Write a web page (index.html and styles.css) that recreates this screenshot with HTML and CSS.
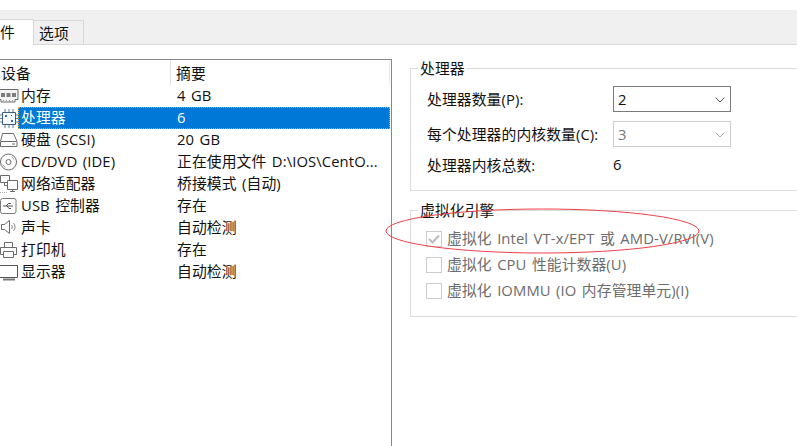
FILE: index.html
```html
<!DOCTYPE html>
<html lang="zh-CN">
<head>
  <meta charset="UTF-8">
  <title>虚拟机设置</title>
  <link rel="stylesheet" href="styles.css">
</head>
<body>
  <!-- Tabs -->
  <div class="tab-strip">
    <div class="tab tab-active">件</div>
    <div class="tab">选项</div>
  </div>

  <div class="content">
    <!-- Device list -->
    <div class="device-panel">
      <div class="device-head">
        <div class="col-name">设备</div>
        <div class="col-summary">摘要</div>
      </div>
      <div class="device-row">
        <svg class="device-icon" viewBox="0 0 18 20"><path d="M-1 3.500h19v10h-3v2.500H1v-2.500h-2z" fill="#f4f4f4" stroke="#6b6b6b"/><path d="M1 7h4v4H1zM6.500 7h4v4h-4zM12 7h4v4h-4z" fill="#7d7d7d"/><path d="M3 14.500h1M6 14.500h1M9 14.500h1M12 14.500h1" stroke="#999"/></svg>
        <div class="col-name">内存</div>
        <div class="col-summary">4 GB</div>
      </div>
      <div class="device-row selected">
        <svg class="device-icon" viewBox="0 0 18 20"><path d="M2.500 4.500h13v12h-13z" fill="#f6fbff" stroke="#3f5f80"/><path d="M0 7h2M0 10.500h2M0 14h2M16 7h2M16 10.500h2M16 14h2M5 1v3M9 1v3M13 1v3M5 17v3M9 17v3M13 17v3" stroke="#5a7ea6"/><path d="M5 7h2v2H5zM11 12h2v2h-2zM11 7h1v1h-1z" fill="#2c6cb0"/></svg>
        <div class="row-fill">
          <div class="col-name">处理器</div>
          <div class="col-summary">6</div>
        </div>
      </div>
      <div class="device-row">
        <svg class="device-icon" viewBox="0 0 18 20"><path d="M2.500 3.500h11l3.500 8v5H.5v-5z" fill="#fff" stroke="#6b6b6b"/><path d="M1 11.500h15.500M12 14h3" stroke="#6b6b6b"/></svg>
        <div class="col-name">硬盘 (SCSI)</div>
        <div class="col-summary">20 GB</div>
      </div>
      <div class="device-row">
        <svg class="device-icon" viewBox="0 0 18 20"><circle cx="8.500" cy="10" r="8" fill="#fff" stroke="#6b6b6b"/><circle cx="8.500" cy="10" r="2.500" fill="#fff" stroke="#6b6b6b"/><path d="M11.500 4.500a6 6 0 0 1 2.500 3M5.500 15.500a6 6 0 0 1-2.500-3" fill="none" stroke="#999"/></svg>
        <div class="col-name">CD/DVD (IDE)</div>
        <div class="col-summary">正在使用文件 D:\IOS\CentO...</div>
      </div>
      <div class="device-row">
        <svg class="device-icon" viewBox="0 0 18 20"><path d="M.5 1.500h9v7h-9z" fill="#fff" stroke="#6b6b6b"/><path d="M7.500 6.500h10v9h-10z" fill="#fff" stroke="#6b6b6b"/><path d="M4.500 8.500v3h3M12.500 15.500v2M10 17.500h5" fill="none" stroke="#6b6b6b"/><path d="M0 18.500h8" stroke="#aaa" stroke-dasharray="1 1"/></svg>
        <div class="col-name">网络适配器</div>
        <div class="col-summary">桥接模式 (自动)</div>
      </div>
      <div class="device-row">
        <svg class="device-icon" viewBox="0 0 18 20"><rect x=".5" y="2.500" width="15.500" height="15" rx="2" fill="#fff" stroke="#7a7a7a"/><path d="M3 10h10M6 10l2.500-2.500H11M7 10l2 2.500h2" fill="none" stroke="#555"/></svg>
        <div class="col-name">USB 控制器</div>
        <div class="col-summary">存在</div>
      </div>
      <div class="device-row">
        <svg class="device-icon" viewBox="0 0 18 20"><path d="M1.500 6.500h3l5-4v13l-5-4h-3z" fill="#fff" stroke="#6b6b6b"/><path d="M11.500 7a3 3 0 0 1 0 4M13.500 5a6 6 0 0 1 0 8" fill="none" stroke="#8a8a8a"/></svg>
        <div class="col-name">声卡</div>
        <div class="col-summary">自动检测</div>
      </div>
      <div class="device-row">
        <svg class="device-icon" viewBox="0 0 18 20"><path d="M4.500 7.500v-5h8v5" fill="#fff" stroke="#6b6b6b"/><path d="M3.500 14.500h-3v-7h16v7h-3" fill="#fff" stroke="#6b6b6b"/><path d="M3.500 11.500h10v6h-10z" fill="#fff" stroke="#6b6b6b"/></svg>
        <div class="col-name">打印机</div>
        <div class="col-summary">存在</div>
      </div>
      <div class="device-row">
        <svg class="device-icon" viewBox="0 0 18 20"><path d="M-1.500 3.500h19v12h-19z" fill="#fff" stroke="#555"/><path d="M3 17.500h12" stroke="#777" stroke-width="2"/></svg>
        <div class="col-name">显示器</div>
        <div class="col-summary">自动检测</div>
      </div>
    </div>

    <!-- Settings -->
    <div class="settings">
      <div class="group group-cpu">
        <div class="legend">处理器</div>
        <div class="field">
          <div class="field-label">处理器数量(P):</div>
          <div class="combo">2<svg class="combo-arrow" viewBox="0 0 10 6"><path d="M.5 .5l4.500 4.500 4.500-4.500" fill="none" stroke="#555"/></svg></div>
        </div>
        <div class="field">
          <div class="field-label">每个处理器的内核数量(C):</div>
          <div class="combo combo-disabled">3<svg class="combo-arrow" viewBox="0 0 10 6"><path d="M.5 .5l4.500 4.500 4.500-4.500" fill="none" stroke="#aaa"/></svg></div>
        </div>
        <div class="field field-total">
          <div class="field-label">处理器内核总数:</div>
          <div class="field-value">6</div>
        </div>
      </div>

      <div class="group group-virt">
        <div class="legend">虚拟化引擎</div>
        <div class="check">
          <div class="check-box"><svg viewBox="0 0 14 14"><path d="M2 7l3.500 3.500L12 3.500" fill="none" stroke="#bbb" stroke-width="2"/></svg></div>
          <div class="check-text">虚拟化 Intel VT-x/EPT 或 AMD-V/RVI(V)</div>
        </div>
        <div class="check">
          <div class="check-box"></div>
          <div class="check-text">虚拟化 CPU 性能计数器(U)</div>
        </div>
        <div class="check">
          <div class="check-box"></div>
          <div class="check-text">虚拟化 IOMMU (IO 内存管理单元)(I)</div>
        </div>
      </div>
    </div>
  </div>

  <!-- Hand drawn annotation -->
  <svg class="annotation" viewBox="0 0 797 446"><ellipse cx="542.500" cy="231" rx="156.500" ry="22" fill="none" stroke="#f0404a"/></svg>
</body>
</html>
```

FILE: styles.css
```css
html, body {
  margin: 0;
  height: 446px;
  overflow: hidden;
}

body {
  position: relative;
  width: 797px;
  background-color: #fff;
  color: #111;
  font-family: "Open Sans", "Noto Sans CJK SC", sans-serif;
  font-size: 14.8px;
  letter-spacing: 0.1px;
  word-spacing: 1.5px;
}

.tab-strip {
  display: flex;
  align-items: flex-end;
  height: 33px;
  margin-top: 10px;
  padding-top: 1px;
  background-color: #f0f0f0;
  border-bottom: 1px solid #d9d9d9;
}

.tab {
  width: 44px;
  height: 23px;
  padding-left: 5px;
  line-height: 25px;
  background-color: #f0f0f0;
  border: 1px solid #d9d9d9;
  border-bottom: none;
  border-left: none;
}

.tab-active {
  width: 33px;
  height: 25px;
  margin-bottom: -1px;
  padding-left: 0;
  line-height: 25px;
  background-color: #fff;
}

.content {
  display: flex;
  height: 401px;
}

.device-panel {
  flex: none;
  width: 391px;
  margin-top: 14px;
  border-top: 1px solid #828790;
  border-right: 1px solid #828790;
}

.device-head {
  display: flex;
  height: 25px;
  line-height: 27px;
  margin-right: 1px;
  border-right: 1px solid #ececec;
}

.device-head .col-name {
  width: 171px;
  padding-left: 1px;
  box-sizing: border-box;
  border-right: 1px solid #e2e2e2;
}

.device-head .col-summary {
  padding-left: 5px;
}

.device-row {
  display: flex;
  align-items: center;
  height: 22px;
}

.device-icon {
  flex: none;
  width: 18px;
  height: 20px;
  overflow: visible;
}

.device-row .col-name {
  flex: none;
  width: 150px;
  margin-left: 3px;
  padding-bottom: 2px;
  line-height: 20px;
}

.device-row .col-summary {
  margin-left: 6px;
  padding-bottom: 2px;
  line-height: 20px;
  white-space: nowrap;
}

.row-fill {
  display: flex;
  flex: 1;
  height: 22px;
  margin-right: 1px;
  background-color: #0078d7;
  color: #fff;
  outline: 1px dotted #f0a030;
  outline-offset: -1px;
}

.settings {
  flex: 1;
  padding: 23px 0 0 18px;
}

.group {
  position: relative;
  margin-right: -10px;
  border: 1px solid #dcdcdc;
  box-sizing: border-box;
  padding-left: 16px;
}

.group-cpu {
  height: 123px;
  padding-top: 17px;
}

.group-virt {
  height: 107px;
  margin-top: 19px;
  padding-top: 15px;
  padding-left: 15px;
  color: #6d6d6d;
}

.legend {
  position: absolute;
  top: -11px;
  left: 7px;
  padding: 0 2px;
  line-height: 20px;
  background-color: #fff;
  color: #111;
}

.field {
  display: flex;
  align-items: center;
  height: 26px;
  margin-bottom: 9px;
}

.field-label {
  flex: none;
  width: 186px;
  padding-bottom: 1px;
  white-space: nowrap;
}

.combo {
  position: relative;
  width: 118px;
  height: 26px;
  line-height: 24px;
  padding-left: 4px;
  box-sizing: border-box;
  border: 1px solid #7a7a7a;
}

.combo-disabled {
  border-color: #ccc;
  color: #777;
}

.combo-arrow {
  position: absolute;
  top: 10px;
  right: 5px;
  width: 10px;
  height: 6px;
}

.field-total {
  height: 20px;
  margin-top: -2px;
}

.field-total .field-label {
  padding-bottom: 0;
}

.check {
  display: flex;
  align-items: center;
  gap: 5px;
  height: 26px;
}

.check-text {
  padding-bottom: 4px;
}

.check-box {
  width: 16px;
  height: 16px;
  box-sizing: border-box;
  border: 1px solid #ccc;
}

.check-box svg {
  display: block;
  width: 14px;
  height: 14px;
}

.annotation {
  position: absolute;
  top: 0;
  left: 0;
  width: 797px;
  height: 446px;
  pointer-events: none;
}
```
